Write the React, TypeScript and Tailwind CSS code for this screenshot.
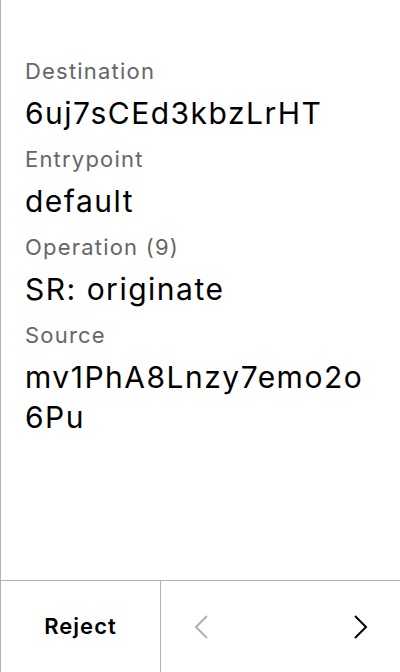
import React from 'react';

const fields = [
  { label: 'Destination', value: '6uj7sCEd3kbzLrHT' },
  { label: 'Entrypoint', value: 'default' },
  { label: 'Operation (9)', value: 'SR: originate' },
  { label: 'Source', value: 'mv1PhA8Lnzy7emo2o6Pu' },
];

export default function App() {
  return (
    <main
      className="w-[400px] h-[672px] flex flex-col bg-white border-l border-[#b3b3b3] text-black"
      style={{ fontFamily: 'Inter, "Noto Sans", sans-serif' }}
    >
      {/* Details */}
      <div className="flex-1 px-6 pt-[57px]">
        {fields.map(f => (
          <div key={f.label} className="mb-[12px]">
            <p className="text-[22px] leading-[28px] tracking-[1.2px] text-[#666666]">{f.label}</p>
            <p className="text-[30px] leading-[40px] tracking-[1.5px] mt-[8px] break-all">{f.value}</p>
          </div>
        ))}
      </div>

      {/* Action bar */}
      <div className="h-[92px] flex border-t border-[#b3b3b3]">
        <button className="w-[160px] flex items-center justify-center text-[22px] tracking-[1px] font-semibold border-r border-[#b3b3b3]">
          Reject
        </button>
        <div className="flex-1 flex items-center justify-between pl-[33px] pr-[32px]">
          <svg width="14" height="24" viewBox="0 0 14 24" fill="none">
            <path d="M13 1 L2 12 L13 23" stroke="#b0b0b0" strokeWidth="2" />
          </svg>
          <svg width="14" height="24" viewBox="0 0 14 24" fill="none">
            <path d="M1 1 L12 12 L1 23" stroke="#000" strokeWidth="2" />
          </svg>
        </div>
      </div>
    </main>
  );
}
